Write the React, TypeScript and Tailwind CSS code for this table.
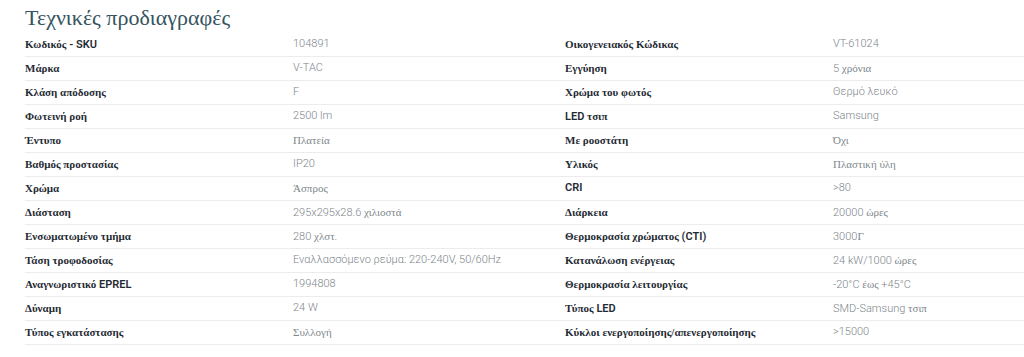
const ROWS: [string, string, string, string][] = [
  ['Κωδικός - SKU', '104891', 'Οικογενειακός Κώδικας', 'VT-61024'],
  ['Μάρκα', 'V-TAC', 'Εγγύηση', '5 χρόνια'],
  ['Κλάση απόδοσης', 'F', 'Χρώμα του φωτός', 'Θερμό λευκό'],
  ['Φωτεινή ροή', '2500 lm', 'LED τσιπ', 'Samsung'],
  ['Έντυπο', 'Πλατεία', 'Με ροοστάτη', 'Όχι'],
  ['Βαθμός προστασίας', 'IP20', 'Υλικός', 'Πλαστική ύλη'],
  ['Χρώμα', 'Άσπρος', 'CRI', '>80'],
  ['Διάσταση', '295x295x28.6 χιλιοστά', 'Διάρκεια', '20000 ώρες'],
  ['Ενσωματωμένο τμήμα', '280 χλστ.', 'Θερμοκρασία χρώματος (CTI)', '3000Γ'],
  ['Τάση τροφοδοσίας', 'Εναλλασσόμενο ρεύμα: 220-240V, 50/60Hz', 'Κατανάλωση ενέργειας', '24 kW/1000 ώρες'],
  ['Αναγνωριστικό EPREL', '1994808', 'Θερμοκρασία λειτουργίας', '-20°C έως +45°C'],
  ['Δύναμη', '24 W', 'Τύπος LED', 'SMD-Samsung τσιπ'],
  ['Τύπος εγκατάστασης', 'Συλλογή', 'Κύκλοι ενεργοποίησης/απενεργοποίησης', '>15000'],
]

// values whose Greek renders in the sans face in the original
const SANS_VALUES = new Set(['Θερμό λευκό', 'Εναλλασσόμενο ρεύμα: 220-240V, 50/60Hz'])

// Greek letters fall back to a serif face, latin uses the site sans
function Mixed({ text, label }: { text: string; label?: boolean }) {
  if (!label && SANS_VALUES.has(text)) return <span>{text}</span>
  const parts = text.split(/([\u0370-\u03ff\u1f00-\u1fff]+(?:[ .\/][\u0370-\u03ff\u1f00-\u1fff]+)*)/)
  return (
    <span>
      {parts.map((p, i) =>
        /[\u0370-\u03ff\u1f00-\u1fff]/.test(p) ? (
          <span
            key={i}
            className={`font-['Liberation_Serif',serif] text-[11px] ${label ? 'font-bold' : 'font-normal'}`}
          >
            {p}
          </span>
        ) : (
          <span key={i}>{p}</span>
        )
      )}
    </span>
  )
}

function Cell({ text, label }: { text: string; label?: boolean }) {
  return (
    <div
      className={`flex items-center whitespace-pre ${
        label
          ? 'w-[268px] font-semibold text-[11px] text-[#1f2b33]'
          : 'w-[272px] font-light text-[11px] text-[#7d868b]'
      }`}
    >
      <Mixed text={text} label={label} />
    </div>
  )
}

export default function App() {
  return (
    <div className="w-[1024px] h-[357px] overflow-hidden bg-white pl-[25px] font-['Roboto',sans-serif]">
      <h2 className="h-[33px] pt-[6px] text-[22px] leading-[24px] text-[#34535e] font-['Liberation_Serif',serif] font-normal">
        Τεχνικές προδιαγραφές
      </h2>
      <div className="w-[1080px]">
        {ROWS.map(([l1, v1, l2, v2]) => (
          <div key={l1} className="flex h-[24px] border-b border-[#ececec]">
            <Cell text={l1} label />
            <Cell text={v1} />
            <Cell text={l2} label />
            <Cell text={v2} />
          </div>
        ))}
      </div>
    </div>
  )
}
